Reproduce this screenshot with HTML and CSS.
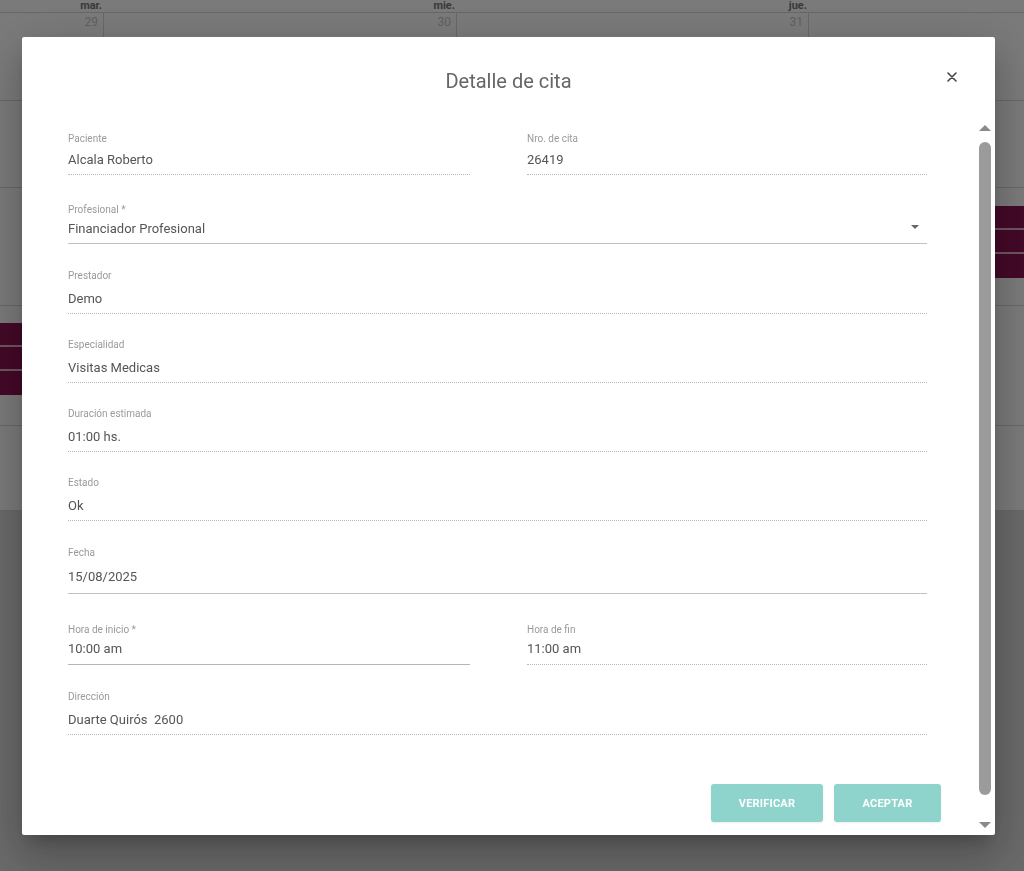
FILE: index.html
```
<html>
<head>
    <title>Detalle de cita</title>
    <link rel="stylesheet" href="styles.css">
</head>
<body>

<div class="calendar">
    <div class="cal-head">
        <div class="day-name">mar.</div>
        <div class="day-name">mie.</div>
        <div class="day-name">jue.</div>
        <div class="day-name"></div>
    </div>
    <div class="cal-row dates">
        <div class="cell">29</div>
        <div class="cell">30</div>
        <div class="cell">31</div>
        <div class="cell"></div>
    </div>
    <div class="cal-row slot-a">
        <div class="cell"></div><div class="cell"></div><div class="cell"></div><div class="cell"></div>
    </div>
    <div class="cal-row slot-b">
        <div class="cell"></div><div class="cell"></div><div class="cell"></div>
        <div class="cell events">
            <div class="event"></div>
            <div class="event"></div>
            <div class="event last"></div>
        </div>
    </div>
    <div class="cal-row slot-c">
        <div class="cell events">
            <div class="event"></div>
            <div class="event"></div>
            <div class="event last"></div>
        </div>
        <div class="cell"></div><div class="cell"></div><div class="cell"></div>
    </div>
    <div class="cal-row slot-d">
        <div class="cell"></div><div class="cell"></div><div class="cell"></div><div class="cell"></div>
    </div>
</div>

<div class="backdrop"></div>

<div class="dialog">
    <div class="dialog-head">
        <h2 class="dialog-title">Detalle de cita</h2>
        <button class="close" title="Cerrar">
            <svg width="10" height="10" viewBox="0 0 10 10">
                <path d="M1 1 L9 9 M9 1 L1 9" stroke="#444" stroke-width="1.6" stroke-linecap="round"/>
            </svg>
        </button>
    </div>

    <div class="dialog-body">
        <div class="scroll-content">
            <div class="form">
                <div class="field first">
                    <label>Paciente</label>
                    <div class="value">Alcala Roberto</div>
                </div>
                <div class="field first">
                    <label>Nro. de cita</label>
                    <div class="value">26419</div>
                </div>

                <div class="field wide field-select">
                    <label>Profesional *</label>
                    <div class="value select">
                        <span>Financiador Profesional</span>
                        <span class="caret"></span>
                    </div>
                </div>

                <div class="field wide nudge">
                    <label>Prestador</label>
                    <div class="value">Demo</div>
                </div>

                <div class="field wide">
                    <label>Especialidad</label>
                    <div class="value">Visitas Medicas</div>
                </div>

                <div class="field wide">
                    <label>Duración estimada</label>
                    <div class="value">01:00 hs.</div>
                </div>

                <div class="field wide">
                    <label>Estado</label>
                    <div class="value">Ok</div>
                </div>

                <div class="field wide field-date nudge">
                    <label>Fecha</label>
                    <div class="value">15/08/2025</div>
                </div>

                <div class="field field-time editable">
                    <label>Hora de inicio *</label>
                    <div class="value">10:00 am</div>
                </div>
                <div class="field field-time">
                    <label>Hora de fin</label>
                    <div class="value">11:00 am</div>
                </div>

                <div class="field wide nudge">
                    <label>Dirección</label>
                    <div class="value">Duarte Quirós&nbsp; 2600</div>
                </div>
            </div>

            <div class="actions">
                <button class="btn verify" disabled>VERIFICAR</button>
                <button class="btn accept" disabled>ACEPTAR</button>
            </div>
        </div>

        <div class="scrollbar">
            <span class="arrow up"></span>
            <span class="thumb"></span>
            <span class="arrow down"></span>
        </div>
    </div>
</div>

</body>
</html>
```

FILE: styles.css
```
* {
    box-sizing: border-box;
}
body {
    margin: 0;
    height: 871px;
    overflow: hidden;
    background: #dcdcdc;
    font-family: Roboto, "Liberation Sans", sans-serif;
}

/* calendar behind the dialog */
.calendar {
    background: #fff;
}
.cal-head,
.cal-row {
    display: grid;
    grid-template-columns: 104px 353px 352px 1fr;
    border-bottom: 1px solid #d8d8d8;
}
.cal-head {
    height: 13px;
}
.day-name {
    text-align: right;
    padding-right: 2px;
    font-size: 11px;
    font-weight: 700;
    line-height: 12px;
    color: #777;
}
.dates {
    height: 88px;
}
.dates .cell {
    text-align: right;
    padding: 2px 5px 0 0;
    font-size: 12px;
    color: #c8c8c8;
}
.cell {
    border-right: 1px solid #d8d8d8;
}
.cell:last-child {
    border-right: none;
}
.slot-a { height: 87px; }
.slot-b { height: 118px; }
.slot-c { height: 120px; }
.slot-d { height: 85px; }

.events {
    padding-top: 17px;
}
.slot-b .events {
    padding-top: 18px;
}
.event {
    height: 24px;
    background: #8e1254;
    border-bottom: 2px solid #e4b6cc;
}
.event.last {
    height: 24px;
    border-bottom: none;
}

.backdrop {
    position: fixed;
    top: 0;
    left: 0;
    right: 0;
    bottom: 0;
    background: rgba(0, 0, 0, 0.52);
}

/* dialog */
.dialog {
    position: fixed;
    left: 22px;
    top: 37px;
    width: 973px;
    height: 798px;
    background: #fff;
    border-radius: 2px;
    display: flex;
    flex-direction: column;
    box-shadow: 0 11px 15px -7px rgba(0,0,0,.2), 0 24px 38px 3px rgba(0,0,0,.14), 0 9px 46px 8px rgba(0,0,0,.12);
}
.dialog-head {
    height: 83px;
    display: grid;
    grid-template-columns: 1fr auto 1fr;
    align-items: start;
}
.dialog-title {
    grid-column: 2;
    margin: 32px 0 0 0;
    font-size: 20px;
    line-height: 24px;
    font-weight: 400;
    color: #666;
}
.close {
    grid-column: 3;
    justify-self: end;
    margin: 33px 36px 0 0;
    width: 14px;
    height: 14px;
    padding: 0;
    border: none;
    background: none;
    display: flex;
    align-items: center;
    justify-content: center;
}

.dialog-body {
    flex: 1;
    display: flex;
    min-height: 0;
}
.scroll-content {
    flex: 1;
    padding: 13px 0 0 46px;
}

.form {
    display: grid;
    grid-template-columns: 402px 400px;
    column-gap: 57px;
    row-gap: 25px;
}
.field.wide {
    grid-column: 1 / -1;
}
.field label {
    display: block;
    height: 12px;
    font-size: 10px;
    line-height: 12px;
    color: #9a9a9a;
}
.field .value {
    margin-top: 9px;
    font-size: 13px;
    line-height: 16px;
    color: #555;
    padding-bottom: 6px;
    border-bottom: 1px dotted #b8b8b8;
}
.field.first .value {
    margin-top: 7px;
}
.nudge {
    margin-top: 1px;
}
.field-select {
    margin-top: 4px;
}
.field-select .value {
    margin-top: 5px;
    border-bottom: 1px solid #c2c2c2;
}
.select {
    display: flex;
    justify-content: space-between;
    align-items: center;
}
.caret {
    width: 0;
    height: 0;
    margin: 0 8px 4px 0;
    border-left: 4px solid transparent;
    border-right: 4px solid transparent;
    border-top: 4px solid #666;
}
.field-date .value {
    margin-top: 10px;
    padding-bottom: 8px;
    border-bottom: 1px solid #c2c2c2;
}
.field-time {
    margin-top: 5px;
}
.field-time .value {
    margin-top: 5px;
    padding-bottom: 7px;
}
.field-time.editable .value {
    border-bottom: 1px solid #b5b5b5;
}

.actions {
    width: 873px;
    margin-top: 49px;
    display: flex;
    justify-content: flex-end;
    gap: 11px;
}
.btn {
    height: 38px;
    border: none;
    border-radius: 3px;
    background: #8fd4cc;
    color: #fff;
    font-family: Roboto, "Liberation Sans", sans-serif;
    font-size: 11px;
    font-weight: 700;
    letter-spacing: 0.2px;
    box-shadow: 0 1px 2px rgba(0,0,0,.08);
}
.verify {
    width: 112px;
}
.accept {
    width: 107px;
}

/* fake scrollbar drawn on the right edge */
.scrollbar {
    width: 14px;
    margin-right: 3px;
    display: flex;
    flex-direction: column;
    align-items: center;
}
.arrow {
    width: 0;
    height: 0;
    border-left: 6px solid transparent;
    border-right: 6px solid transparent;
}
.arrow.up {
    margin: 5px 0 11px 0;
    border-bottom: 6px solid #8a8a8a;
}
.arrow.down {
    margin: 27px 0 7px 0;
    border-top: 6px solid #8a8a8a;
}
.thumb {
    flex: 1;
    width: 12px;
    border-radius: 6px;
    background: #9b9b9b;
}
```
